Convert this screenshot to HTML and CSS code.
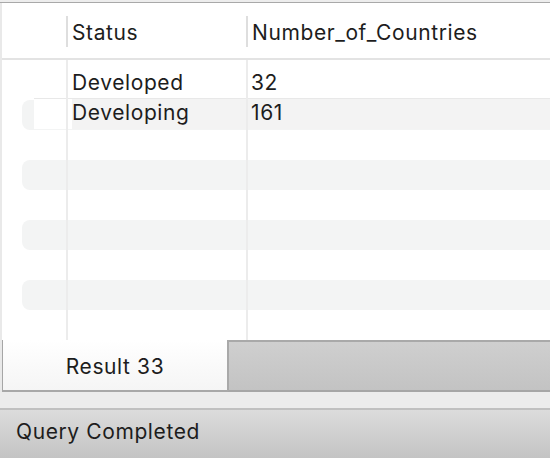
FILE: index.html
```html
<!DOCTYPE html>
<html>
<head>
<meta charset="utf-8">
<link rel="stylesheet" href="styles.css">
</head>
<body>
<div class="app">
  <div class="topbar"></div>
  <div class="panel">
    <div class="header">
      <div class="hcell rowhead"></div>
      <div class="hsep"></div>
      <div class="hcell col1">Status</div>
      <div class="hsep"></div>
      <div class="hcell col2">Number_of_Countries</div>
    </div>
    <div class="body">
      <div class="layer stripes">
        <div class="stripe"></div>
        <div class="stripe alt"></div>
        <div class="stripe"></div>
        <div class="stripe alt"></div>
        <div class="stripe"></div>
        <div class="stripe alt"></div>
        <div class="stripe"></div>
        <div class="stripe alt"></div>
      </div>
      <div class="layer data">
        <div class="row">
          <div class="gutter"></div>
          <div class="rnum"></div>
          <div class="cell c1">Developed</div>
          <div class="cell c2">32</div>
        </div>
        <div class="row sel">
          <div class="gutter"></div>
          <div class="rnum"></div>
          <div class="cell c1">Developing</div>
          <div class="cell c2">161</div>
        </div>
      </div>
      <div class="layer lines">
        <div class="vline first"></div>
        <div class="vline second"></div>
      </div>
    </div>
  </div>
  <div class="tabbar">
    <div class="tab">Result 33</div>
    <div class="tabrest"></div>
  </div>
  <div class="spacer"></div>
  <div class="status">Query Completed</div>
</div>
</body>
</html>
```
FILE: styles.css
```css
html, body {
  margin: 0;
  padding: 0;
  background: #ffffff;
}
.app {
  width: 550px;
  height: 458px;
  overflow: hidden;
  display: flex;
  flex-direction: column;
  font-family: Inter, "Liberation Sans", sans-serif;
  font-size: 21px;
  letter-spacing: 0.6px;
  color: #1d1d1d;
}
.topbar {
  height: 2px;
  background: #ededed;
  border-bottom: 1px solid #a9a9a9;
  flex: none;
}
.panel {
  border-left: 2px solid #e9e9e9;
  background: #fff;
  flex: none;
}
.header {
  height: 55px;
  border-bottom: 2px solid #e3e3e3;
  display: flex;
  align-items: flex-start;
}
.hcell {
  height: 55px;
  display: flex;
  align-items: center;
  padding-top: 4px;
  box-sizing: border-box;
  white-space: nowrap;
}
.rowhead { width: 64px; }
.hsep {
  width: 2px;
  height: 31px;
  margin-top: 13px;
  background: #dedede;
  flex: none;
}
.col1 { width: 178px; padding-left: 4px; }
.col2 { flex: 1; padding-left: 4px; }

.body {
  height: 280px;
  display: grid;
  overflow: hidden;
}
.layer {
  grid-area: 1 / 1;
  min-width: 0;
}
.stripes {
  padding-top: 10px;
  padding-left: 20px;
  display: flex;
  flex-direction: column;
  margin-right: -20px;
}
.stripe {
  height: 30px;
  flex: none;
}
.stripe.alt {
  background: #f3f4f4;
  border-radius: 8px;
}
.data {
  padding-top: 7px;
  display: flex;
  flex-direction: column;
}
.row {
  height: 31px;
  display: flex;
  align-items: stretch;
  box-sizing: border-box;
  white-space: nowrap;
  flex: none;
}
.gutter { width: 32px; flex: none; }
.rnum { width: 38px; flex: none; }
.cell {
  display: flex;
  align-items: center;
  padding-bottom: 1px;
  box-sizing: border-box;
}
.c1 { width: 179px; flex: none; }
.c2 { flex: 1; }
.row.sel .rnum {
  background: #ffffff;
  border-top: 1px solid #e8e8e8;
  box-sizing: border-box;
}
.row.sel .cell {
  background: #f3f3f3;
  border-top: 1px solid #e8e8e8;
  padding-bottom: 4px;
}
.lines {
  display: flex;
  padding-left: 64px;
}
.vline {
  width: 2px;
  background: #ececec;
  flex: none;
}
.vline.second { margin-left: 178px; }

.tabbar {
  height: 52px;
  display: flex;
  flex: none;
  border-left: 2px solid #e9e9e9;
}
.tab {
  width: 225px;
  border-left: 1px solid #a6a6a6;
  border-bottom: 2px solid #a8a8a8;
  background: linear-gradient(#ffffff, #f5f5f5);
  display: flex;
  align-items: center;
  justify-content: center;
  padding-top: 2px;
  box-sizing: border-box;
}
.tabrest {
  flex: 1;
  border-top: 2px solid #a9a9a9;
  border-left: 2px solid #a9a9a9;
  border-bottom: 2px solid #a6a6a6;
  background: linear-gradient(#cfcfcf, #c3c3c3);
}
.spacer {
  height: 16px;
  background: #ececec;
  border-bottom: 2px solid #c0c0c0;
  flex: none;
}
.status {
  height: 48px;
  flex: none;
  background: linear-gradient(#dcdcdc, #c4c4c4);
  display: flex;
  align-items: center;
  padding-left: 16px;
  padding-bottom: 6px;
  box-sizing: border-box;
}
```
